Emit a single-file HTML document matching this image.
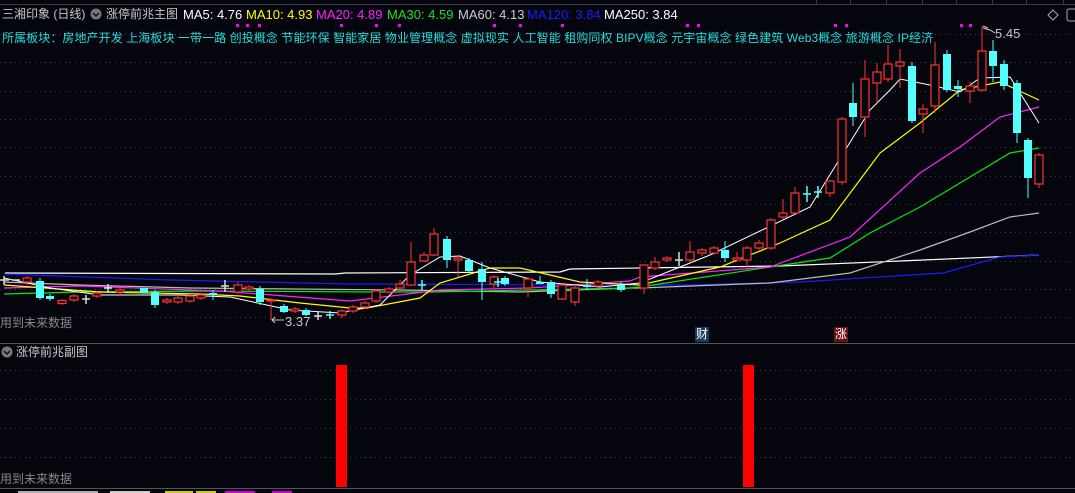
<!DOCTYPE html>
<html><head><meta charset="utf-8"><style>
html,body{margin:0;padding:0;background:#05050d;width:1075px;height:493px;overflow:hidden;font-family:"Liberation Sans","Noto Sans CJK SC",sans-serif}
.t{position:absolute;white-space:nowrap;font-size:13px;line-height:15px}
.c{font-size:12px}
</style></head><body>
<svg width="1075" height="493" style="position:absolute;left:0;top:0" xmlns="http://www.w3.org/2000/svg">
<g stroke="#3a3a4a" stroke-width="1">
<line x1="0" y1="4.5" x2="1075" y2="4.5"/>
<line x1="816.5" y1="0" x2="816.5" y2="4"/><line x1="850.5" y1="0" x2="850.5" y2="4"/><line x1="886.5" y1="0" x2="886.5" y2="4"/><line x1="922.5" y1="0" x2="922.5" y2="4"/><line x1="956.5" y1="0" x2="956.5" y2="4"/><line x1="992.5" y1="0" x2="992.5" y2="4"/><line x1="1026.5" y1="0" x2="1026.5" y2="4"/><line x1="1063.5" y1="0" x2="1063.5" y2="4"/>
</g>
<g stroke="#3a3a48" stroke-width="1" stroke-dasharray="1,4">
<line x1="0" y1="34.5" x2="1075" y2="34.5"/><line x1="0" y1="62.5" x2="1075" y2="62.5"/><line x1="0" y1="91.5" x2="1075" y2="91.5"/><line x1="0" y1="119.5" x2="1075" y2="119.5"/><line x1="0" y1="147.5" x2="1075" y2="147.5"/><line x1="0" y1="176.5" x2="1075" y2="176.5"/><line x1="0" y1="204.5" x2="1075" y2="204.5"/><line x1="0" y1="232.5" x2="1075" y2="232.5"/><line x1="0" y1="261.5" x2="1075" y2="261.5"/><line x1="0" y1="289.5" x2="1075" y2="289.5"/><line x1="0" y1="317.5" x2="1075" y2="317.5"/>
<line x1="0" y1="370.5" x2="1075" y2="370.5"/><line x1="0" y1="399.5" x2="1075" y2="399.5"/><line x1="0" y1="428.5" x2="1075" y2="428.5"/><line x1="0" y1="457.5" x2="1075" y2="457.5"/>
</g>
<line x1="0" y1="343.5" x2="1075" y2="343.5" stroke="#555" />
<line x1="0" y1="488.5" x2="1075" y2="488.5" stroke="#555" />
<g fill="none" stroke-width="1.2">
<polyline stroke="#ffffff" points="5,273 335,274 345,273 560,272 570,269 640,268 780,266 900,261 1039,255"/>
<polyline stroke="#1a1aff" points="4,274 170,280 350,284 630,285 690,285 800,282 943,273 1000,257 1039,255"/>
<polyline stroke="#bbbbbb" points="4,282 80,285 190,288 400,290 520,292 630,288 640,288 770,283 850,273 920,250 970,232 1010,217 1039,213"/>
<polyline stroke="#00ee00" points="4,294 80,292 200,291 380,292 430,292 630,288 640,287 770,267 830,258 870,233 920,207 970,177 1010,153 1039,148"/>
<polyline stroke="#ff22ff" points="4,288 80,286 220,291 350,301 440,290 530,288 630,281 640,277 770,267 850,237 920,173 960,147 1000,117 1039,107"/>
<polyline stroke="#ffff00" points="4,285 100,292 200,294 240,296 300,303 350,308 367,308 420,298 440,283 490,268 520,268 580,282 640,285 720,267 780,243 830,220 880,153 920,123 960,90 1000,82 1039,100"/>
<polyline stroke="#ffffff" stroke-width="1" points="4,278 50,288 100,295 180,295 230,297 290,310 340,313 380,305 410,275 440,257 460,256 490,268 540,282 600,287 640,283 710,255 810,207 870,110 890,90 900,79 930,85 960,92 980,78 1010,77 1039,123"/>
</g>
<g stroke="#ff3333" stroke-width="1" fill="none">
<path d="M27,276V285 M62,299V305 M74,294V302 M97,291V298 M120,288V294 M167,298V304 M178,296V304 M190,294V303 M201,293V300 M238,282V294 M249,285V291 M271,298V320 M295,307V313 M342,309V318 M353,305V313 M365,301V309 M376,289V303 M389,287V294 M400,280V292 M411,242V286 M424,252V262 M434,228V256 M458,256V277 M494,275V288 M528,277V297 M562,284V300 M575,286V306 M598,280V288 M644,265V294 M655,257V270 M667,256V262 M690,241V262 M702,248V256 M714,246V255 M737,252V262 M747,246V270 M759,240V250 M771,218V250 M783,199V219 M795,187V214 M830,180V197 M842,117V185 M865,60V137 M877,63V103 M888,45V82 M900,49V88 M923,104V133 M935,42V113 M970,82V103 M982,26V92 M1039,153V188"/>
</g>
<g stroke="#ff3333" stroke-width="1.2" fill="#05050d">
<rect x="23" y="278" width="8" height="4"/><rect x="58" y="300.5" width="8" height="3"/><rect x="70" y="296" width="8" height="4"/><rect x="93" y="293" width="8" height="3"/><rect x="116" y="290" width="8" height="2"/><rect x="163" y="300" width="8" height="2"/><rect x="174" y="298" width="8" height="4"/><rect x="186" y="296" width="8" height="5"/><rect x="197" y="295" width="8" height="3"/>
<rect x="234" y="285" width="8" height="7"/><rect x="245" y="287" width="8" height="2"/><rect x="267" y="300" width="8" height="1"/><rect x="291" y="309" width="8" height="2"/><rect x="338" y="311" width="8" height="4"/><rect x="349" y="307" width="8" height="4"/><rect x="361" y="303" width="8" height="4"/><rect x="372" y="291" width="8" height="10"/><rect x="385" y="289" width="8" height="3"/><rect x="396" y="284" width="8" height="4"/><rect x="407" y="262" width="8" height="23"/><rect x="420" y="255" width="8" height="6"/><rect x="430" y="234" width="8" height="21"/><rect x="454" y="258" width="8" height="2"/><rect x="490" y="277" width="8" height="7"/><rect x="524" y="279" width="8" height="9"/><rect x="558" y="285" width="8" height="14"/><rect x="571" y="288" width="8" height="14"/><rect x="594" y="282" width="8" height="4"/>
<rect x="640" y="265" width="8" height="23"/><rect x="651" y="262" width="8" height="6"/><rect x="663" y="258" width="8" height="2"/><rect x="686" y="252" width="8" height="8"/><rect x="698" y="250" width="8" height="3"/><rect x="710" y="248" width="8" height="5"/><rect x="733" y="258" width="8" height="2"/><rect x="743" y="248" width="8" height="12"/><rect x="755" y="243" width="8" height="5"/><rect x="767" y="220" width="8" height="28"/><rect x="779" y="213" width="8" height="4"/><rect x="791" y="193" width="8" height="20"/><rect x="826" y="181" width="8" height="12"/><rect x="838" y="119" width="8" height="63"/><rect x="861" y="79" width="8" height="38"/><rect x="873" y="72" width="8" height="11"/><rect x="884" y="64" width="8" height="15"/><rect x="896" y="62" width="8" height="4"/><rect x="919" y="109" width="8" height="5"/><rect x="931" y="65" width="8" height="41"/><rect x="966" y="86" width="8" height="5"/><rect x="978" y="51" width="8" height="39"/><rect x="1035" y="155" width="8" height="29"/>
</g>
<g stroke="#55ffff" stroke-width="1" fill="none">
<path d="M40,278V300 M50,294V301 M155,290V308 M213,290V300 M260,286V305 M284,304V313 M306,308V316 M447,236V268 M469,258V273 M482,262V300 M505,276V286 M540,276V284 M551,280V298 M587,279V290 M621,282V292 M725,241V262 M853,83V126 M912,62V123 M947,50V92 M958,80V97 M993,40V82 M1004,60V90 M1017,80V143 M1028,138V198"/>
</g>
<g fill="#55ffff">
<rect x="36" y="281" width="8" height="17"/><rect x="46" y="296" width="8" height="3"/><rect x="140" y="288" width="8" height="5"/><rect x="151" y="292" width="8" height="13"/><rect x="209" y="293" width="8" height="2"/><rect x="256" y="289" width="8" height="13"/><rect x="280" y="306" width="8" height="6"/><rect x="302" y="310" width="8" height="5"/><rect x="443" y="239" width="8" height="21"/><rect x="465" y="260" width="8" height="11"/><rect x="478" y="269" width="8" height="13"/><rect x="501" y="278" width="8" height="6"/><rect x="536" y="282" width="8" height="2"/><rect x="547" y="282" width="8" height="12"/><rect x="583" y="285" width="8" height="2"/><rect x="617" y="285" width="8" height="5"/>
<rect x="721" y="250" width="8" height="8"/><rect x="849" y="103" width="8" height="14"/><rect x="908" y="66" width="8" height="55"/><rect x="943" y="54" width="8" height="36"/><rect x="954" y="86" width="8" height="3"/><rect x="989" y="51" width="8" height="15"/><rect x="1000" y="64" width="8" height="22"/><rect x="1013" y="83" width="8" height="50"/><rect x="1024" y="140" width="8" height="38"/>
</g>
<g stroke="#55ffff" stroke-width="1.5"><path d="M326,315H334 M330,311V319 M418,285H426 M422,280V290 M494,282H502 M498,278V287 M803,194H811 M807,186V202 M814,192H822 M818,186V198"/></g>
<g stroke="#dddddd" stroke-width="1.5"><path d="M0,280H9 M4,276V285 M12,280H20 M82,299H90 M86,295V304 M104,288H112 M108,284V293 M221,286H229 M225,280V292 M314,316H322 M318,312V320 M675,260H683 M679,252V266"/></g>
<path d="M284,320H272 M275,317L272,320L275,323" stroke="#cccccc" fill="none"/>
<path d="M983,28L990,30L995,33" stroke="#cccccc" fill="none"/>
<line x1="983" y1="26" x2="988" y2="28" stroke="#ccc"/>
<g fill="#ff00ff"><rect x="236" y="24" width="3" height="3"/><rect x="246" y="24" width="3" height="3"/><rect x="258" y="24" width="3" height="3"/><rect x="340" y="24" width="3" height="3"/><rect x="375" y="24" width="3" height="3"/><rect x="398" y="24" width="3" height="3"/><rect x="493" y="24" width="3" height="3"/><rect x="519" y="24" width="3" height="3"/><rect x="561" y="24" width="3" height="3"/><rect x="686" y="24" width="3" height="3"/><rect x="697" y="24" width="3" height="3"/><rect x="834" y="24" width="3" height="3"/><rect x="845" y="24" width="3" height="3"/><rect x="960" y="24" width="3" height="3"/><rect x="969" y="24" width="3" height="3"/></g>
<rect x="336" y="365" width="11" height="122" fill="#ff0000"/>
<rect x="743" y="365" width="11" height="122" fill="#ff0000"/>
<circle cx="96" cy="14" r="5.5" fill="#777"/><path d="M93,13L96,16L99,13" stroke="#111" stroke-width="1.5" fill="none"/>
<circle cx="7" cy="352" r="5.5" fill="#777"/><path d="M4,351L7,354L10,351" stroke="#111" stroke-width="1.5" fill="none"/>
<path d="M1053,10L1058,15L1053,20L1048,15Z" stroke="#aaa" fill="none"/>
<rect x="1067" y="9" width="10" height="12" rx="2" stroke="#aaa" fill="none"/>
<rect x="695" y="327" width="14" height="15" fill="#1a3a5a"/>
<rect x="834" y="327" width="14" height="15" fill="#6a1010"/>
<g opacity="0.8"><rect x="18" y="491" width="80" height="2" fill="#ddd"/>
<rect x="110" y="491" width="40" height="2" fill="#fff"/><rect x="165" y="491" width="28" height="2" fill="#ff0"/><rect x="196" y="491" width="20" height="2" fill="#ff0"/><rect x="225" y="491" width="30" height="2" fill="#f0f"/><rect x="272" y="491" width="20" height="2" fill="#f0f"/></g>
</svg>
<div class="t c" style="left:2px;top:7px;color:#c8c8c8">三湘印象 (日线)</div>
<div class="t c" style="left:106px;top:7px;color:#c8c8c8">涨停前兆主图</div>
<div class="t" style="left:183px;top:7px;color:#ffffff">MA5: 4.76</div>
<div class="t" style="left:246px;top:7px;color:#ffff00">MA10: 4.93</div>
<div class="t" style="left:316px;top:7px;color:#ff22ff">MA20: 4.89</div>
<div class="t" style="left:387px;top:7px;color:#22dd22">MA30: 4.59</div>
<div class="t" style="left:458px;top:7px;color:#cccccc">MA60: 4.13</div>
<div class="t" style="left:527px;top:7px;color:#1a1aff">MA120: 3.84</div>
<div class="t" style="left:604px;top:7px;color:#ffffff">MA250: 3.84</div>
<div class="t c" style="left:2px;top:31px;color:#22dddd;letter-spacing:0.08px">所属板块：房地产开发 上海板块 一带一路 创投概念 节能环保 智能家居 物业管理概念 虚拟现实 人工智能 租购同权 BIPV概念 元宇宙概念 绿色建筑 Web3概念 旅游概念 IP经济</div>
<div class="t" style="left:995px;top:26px;color:#c8c8c8">5.45</div>
<div class="t" style="left:285px;top:314px;color:#c8c8c8">3.37</div>
<div class="t c" style="left:0px;top:316px;color:#888">用到未来数据</div>
<div class="t c" style="left:16px;top:345px;color:#c8c8c8">涨停前兆副图</div>
<div class="t c" style="left:0px;top:472px;color:#888">用到未来数据</div>
<div class="t" style="left:696px;top:327px;color:#fff;font-size:12px">财</div>
<div class="t" style="left:835px;top:327px;color:#fff;font-size:12px">涨</div>
</body></html>
